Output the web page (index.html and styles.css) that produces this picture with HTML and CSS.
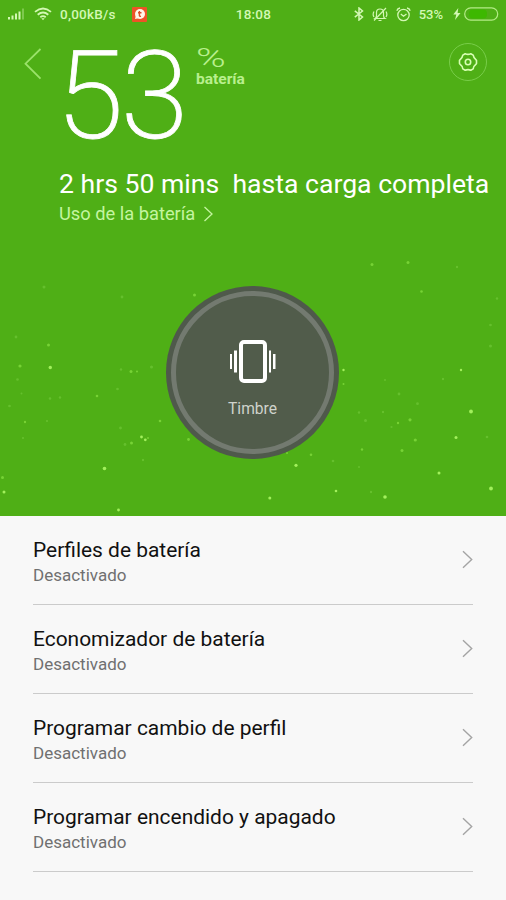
FILE: index.html
```html
<!DOCTYPE html>
<html lang="es">
<head>
<meta charset="utf-8">
<title>Batería</title>
<link rel="stylesheet" href="styles.css">
</head>
<body>
<main class="screen">
  <section class="hero">
    <svg class="particles" viewBox="0 0 506 516" aria-hidden="true">
      <g fill="#a2f05c">
        <circle cx="50.300" cy="367.500" r="1.700"/><circle cx="104.500" cy="468.500" r="1.800"/><circle cx="141.500" cy="437" r="1.400"/><circle cx="145.300" cy="439.800" r="1.400"/><circle cx="4" cy="492" r="1.500"/><circle cx="118.500" cy="510" r="1.400"/>
        <circle cx="471" cy="411.500" r="1.900"/><circle cx="491" cy="488.500" r="1.900"/><circle cx="385" cy="497" r="1.800"/><circle cx="296" cy="465.300" r="1.600"/><circle cx="456" cy="437.500" r="1.500"/><circle cx="439" cy="473" r="1.500"/><circle cx="461" cy="370" r="1.200"/><circle cx="343.500" cy="370" r="1.200"/><circle cx="269.800" cy="498" r="1.500"/><circle cx="336" cy="491" r="1.300"/>
      </g>
      <g fill="#7ed93b" opacity=".85">
        <circle cx="48.500" cy="345" r="1.500"/><circle cx="20" cy="366" r="1.600"/><circle cx="97" cy="396" r="1.300"/><circle cx="131" cy="371.500" r="1.500"/><circle cx="137" cy="371.500" r="1"/><circle cx="2.500" cy="477.500" r="1.500"/><circle cx="25" cy="422" r="1.200"/><circle cx="131.500" cy="443" r="1.500"/><circle cx="148" cy="438" r="1"/><circle cx="188.500" cy="439.500" r="1.400"/><circle cx="194.500" cy="295" r="1.500"/><circle cx="160" cy="421" r="1.300"/>
        <circle cx="372" cy="264.500" r="1.500"/><circle cx="408" cy="262.500" r="1.500"/><circle cx="421.500" cy="291.500" r="1.300"/><circle cx="410" cy="419.800" r="1.600"/><circle cx="415.300" cy="440" r="1.600"/><circle cx="402" cy="450.500" r="1.500"/><circle cx="398" cy="423" r="1.200"/><circle cx="362" cy="449.500" r="1.200"/><circle cx="311" cy="454.700" r="1.300"/><circle cx="343.500" cy="384" r="1"/><circle cx="287" cy="453" r="1"/>
      </g>
      <g fill="#72c93a" opacity=".65">
        <circle cx="44" cy="287" r="1.500"/><circle cx="122" cy="297" r="1.400"/><circle cx="16" cy="337" r="1.400"/><circle cx="17.500" cy="379.500" r="1.300"/><circle cx="21.500" cy="393.500" r="1"/><circle cx="50" cy="398.500" r="1.300"/><circle cx="60" cy="397.500" r="1.200"/><circle cx="9.500" cy="406" r="1.300"/><circle cx="47" cy="421" r="1.100"/><circle cx="23" cy="438" r="1.100"/><circle cx="121" cy="369.500" r="1.200"/><circle cx="151.500" cy="367" r="1.500"/><circle cx="117.500" cy="389" r="1.300"/><circle cx="120.500" cy="428" r="1.400"/><circle cx="125" cy="444.500" r="1.400"/><circle cx="143" cy="460" r="1.200"/>
        <circle cx="457" cy="267" r="1.200"/><circle cx="497" cy="298.500" r="1.200"/><circle cx="490.500" cy="325" r="1.300"/><circle cx="490.500" cy="346" r="1.500"/><circle cx="385" cy="380" r="1"/><circle cx="443" cy="379" r="1.200"/><circle cx="399" cy="394" r="1.400"/><circle cx="417.500" cy="403.700" r="1.400"/><circle cx="359" cy="412.500" r="1.200"/><circle cx="383" cy="412" r="1.200"/><circle cx="365.500" cy="420.500" r="1.500"/><circle cx="391.500" cy="427" r="1.100"/><circle cx="487" cy="437" r="1.300"/><circle cx="333" cy="461" r="1.300"/><circle cx="359" cy="467" r="1"/><circle cx="371" cy="492" r="1.200"/>
      </g>
    </svg>

    <header class="status">
      <div class="status-left">
        <svg class="signal" width="17" height="12" viewBox="0 0 17 12" fill="currentColor"><rect x="0" y="9" width="2" height="2.500"/><rect x="3.500" y="7.500" width="2" height="4"/><rect x="7" y="5.500" width="2" height="6"/><rect x="10.500" y="3.500" width="2" height="8"/><rect x="14" y=".5" width="2" height="11" opacity=".35"/></svg>
        <svg class="wifi" width="18" height="14" viewBox="0 0 18 14" fill="none" stroke="currentColor" stroke-width="1.800"><path d="M1 4.900Q9-1.800 17 4.900M3.700 7.700Q9 3.200 14.300 7.700M6.300 10.200Q9 8 11.700 10.200"/><path d="M7.300 11.200h3.400L9 13.200z" fill="currentColor" stroke="none"/></svg>
        <span class="speed">0,00kB/s</span>
        <svg class="app" width="15" height="15" viewBox="0 0 15 15"><rect width="15" height="15" rx="1" fill="#ed5327"/><circle cx="8" cy="7" r="5" fill="#fff6e8"/><path d="M4 8 3 12l5-1z" fill="#fff6e8"/><path d="M7.400 4v4.500q0 1 1.600.8M6 5.800h3.500" fill="none" stroke="#dc4b2a" stroke-width="1.400"/></svg>
      </div>
      <span class="clock">18:08</span>
      <div class="status-right">
        <svg class="bt" width="10" height="14" viewBox="0 0 10 14" fill="none" stroke="currentColor" stroke-width="1.500"><path d="M.8 3.800 8.500 10 5 13V1l3.500 3L.8 10.200"/></svg>
        <svg class="mute" width="16" height="15" viewBox="0 0 16 15" fill="none" stroke="currentColor" stroke-width="1.200"><path d="M3 11.500h10q-1.500-1-1.500-3V5.500Q11.500 2 8 2T4.500 5.500v3q0 2-1.500 3zM6.500 13.500h3M14 1 2 13.500M2 4.500Q.3 7.500 2 10M14 4.500q1.700 3 0 5.500"/></svg>
        <svg class="alarm" width="15" height="15" viewBox="0 0 15 15" fill="none" stroke="currentColor" stroke-width="1.300"><circle cx="7.500" cy="8" r="5.700"/><path d="m4.800 7 2.700 2.200L10.500 7M.8 3.700Q1.500 1.500 4 1M14.200 3.700Q13.500 1.500 11 1"/></svg>
        <span class="pct">53%</span>
        <svg class="bolt" width="8" height="12" viewBox="0 0 8 12" fill="currentColor"><path d="M5.300 0 .3 6.500h3L2 12l5.500-7H4.600z"/></svg>
        <svg class="cell" width="35" height="14" viewBox="0 0 35 14"><rect x="5" y="2.500" width="18" height="9" rx="4" fill="#3db800"/><rect x=".7" y=".9" width="33" height="12.200" rx="6.100" fill="none" stroke="#b4ec87" stroke-width="1.200"/></svg>
      </div>
    </header>

    <div class="top">
      <svg class="back" width="18" height="32" viewBox="0 0 18 32" fill="none" stroke="#9be26a" stroke-width="1.800"><path d="M16.500 1 1.500 15.700l15 15"/></svg>
      <div class="level">53</div>
      <div class="unit"><span class="sign">%</span><span class="word">batería</span></div>
      <button class="settings" aria-label="Ajustes">
        <svg width="20" height="20" viewBox="0 0 20 20" fill="none" stroke="#d8ffb4" stroke-width="1.600" stroke-linejoin="round"><path d="M7.200 1.700Q10 3 12.800 1.700L15.200 3.100Q15.500 6 18.500 8.400V11.600Q15.500 14 15.200 16.900L12.800 18.300Q10 17 7.200 18.300L4.800 16.900Q4.500 14 1.500 11.600V8.400Q4.500 6 4.800 3.100Z"/><circle cx="10" cy="10" r="2.700"/></svg>
      </button>
    </div>

    <div class="summary">
      <h1 class="remaining">2 hrs 50 mins  hasta carga completa</h1>
      <a class="usage">Uso de la batería<svg width="11" height="16" viewBox="0 0 11 16" fill="none" stroke="currentColor" stroke-width="1.300"><path d="m1.500 1 7.500 7-7.500 7"/></svg></a>
    </div>

    <div class="mode">
      <div class="mode-ring">
        <svg width="46" height="44" viewBox="0 0 46 44" fill="#fff"><rect x="11" y="2" width="24" height="39" rx="3" fill="none" stroke="#fff" stroke-width="4"/><rect x="0" y="14" width="2" height="15"/><rect x="4" y="10.500" width="3" height="22"/><rect x="39" y="10.500" width="2" height="22"/><rect x="43" y="14" width="2.500" height="15"/></svg>
        <span class="mode-name">Timbre</span>
      </div>
    </div>
  </section>

  <ul class="list">
    <li class="row"><div><p class="title">Perfiles de batería</p><p class="state">Desactivado</p></div><svg class="go" width="11" height="19" viewBox="0 0 11 19"><path d="m1 1.200 8.700 8.300L1 17.800"/></svg></li>
    <li class="row"><div><p class="title">Economizador de batería</p><p class="state">Desactivado</p></div><svg class="go" width="11" height="19" viewBox="0 0 11 19"><path d="m1 1.200 8.700 8.300L1 17.800"/></svg></li>
    <li class="row"><div><p class="title">Programar cambio de perfil</p><p class="state">Desactivado</p></div><svg class="go" width="11" height="19" viewBox="0 0 11 19"><path d="m1 1.200 8.700 8.300L1 17.800"/></svg></li>
    <li class="row"><div><p class="title">Programar encendido y apagado</p><p class="state">Desactivado</p></div><svg class="go" width="11" height="19" viewBox="0 0 11 19"><path d="m1 1.200 8.700 8.300L1 17.800"/></svg></li>
  </ul>
</main>
</body>
</html>
```
FILE: styles.css
```css
* { box-sizing: border-box; margin: 0; padding: 0; }
body { background: #f8f8f8; font-family: Roboto, "Liberation Sans", sans-serif; }
svg { display: block; flex: none; }
.screen { width: 506px; height: 900px; overflow: hidden; }

.hero { position: relative; height: 516px; background: #4faf16; color: #fff; }
.particles { position: absolute; inset: 0; width: 506px; height: 516px; }

.status { position: relative; display: grid; grid-template-columns: 1fr auto 1fr; align-items: center; height: 28px; padding: 0 7px 0 8px; color: #d3f8b4; font-size: 13px; font-weight: 500; }
.status-left, .status-right { display: flex; align-items: center; }
.status-right { justify-content: flex-end; }
.wifi { margin-left: 9px; }
.speed { margin-left: 8px; width: 57px; font-size: 13.500px; letter-spacing: .25px; white-space: nowrap; }
.app { margin-left: 15px; }
.clock { font-size: 13.500px; letter-spacing: .2px; }
.mute { margin-left: 8px; }
.alarm { margin-left: 8px; }
.pct { margin-left: 8px; font-size: 13px; }
.bolt { margin-left: 10px; }
.cell { margin-left: 3px; }

.top { position: relative; display: flex; align-items: flex-start; height: 136px; padding: 20px 19px 0 24px; }
.level { margin-left: 14px; width: 140px; height: 100px; font-weight: 200; font-size: 123px; line-height: 96px; letter-spacing: -3px; -webkit-text-stroke: .8px #fff; white-space: nowrap; }
.unit { display: flex; flex-direction: column; color: #b9ef8e; }
.sign { width: 18px; font-weight: 300; font-size: 26px; line-height: 21px; margin-bottom: 1px; transform: scaleX(1.55); transform-origin: left; }
.word { font-size: 15.500px; font-weight: 700; line-height: 18px; }
.settings { display: grid; place-items: center; width: 38px; height: 38px; margin: -5px 0 0 auto; border: 1px solid #78cd49; border-radius: 50%; background: none; }

.summary { position: relative; padding-left: 59px; height: 122px; }
.remaining { font-size: 26.600px; font-weight: 400; line-height: 40px; white-space: pre; }
.usage { display: flex; align-items: center; gap: 8px; color: #c4f5a0; font-size: 18.300px; line-height: 20px; }

.mode { position: relative; width: 173px; height: 173px; margin: 0 0 0 166px; padding: 5px; border-radius: 50%; background: #4f594b; }
.mode-ring { display: flex; flex-direction: column; align-items: center; width: 163px; height: 163px; padding-top: 44px; border: 5px solid #737a70; border-radius: 50%; background: #515c4b; }
.mode-name { margin-top: 15px; color: #cfd3cc; font-size: 15.600px; line-height: 20px; }

.list { padding: 0 33px; list-style: none; }
.row { display: flex; justify-content: space-between; align-items: center; height: 89px; border-bottom: 1px solid #cbcbcb; }
.title { padding-top: 4px; color: #111; font-size: 20.950px; line-height: 26px; }
.state { color: #707070; font-size: 17px; line-height: 24px; }
.go { margin-bottom: 1px; fill: none; stroke: #a4a4a4; stroke-width: 1.400; }
```
